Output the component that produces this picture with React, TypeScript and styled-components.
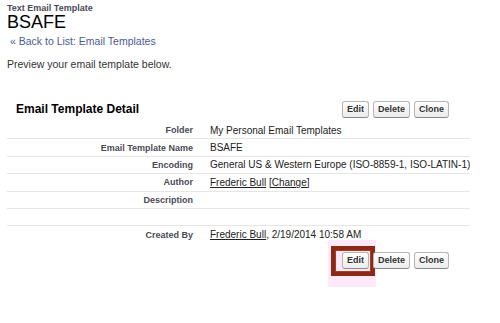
import React from "react";
import styled, { createGlobalStyle } from "styled-components";

const GlobalStyle = createGlobalStyle`
  html, body {
    margin: 0;
    padding: 0;
    background: #ffffff;
  }
  body {
    font-family: "Liberation Sans", Arial, sans-serif;
    color: #222222;
  }
`;

type Row = {
  label: string;
  value?: React.ReactNode;
};

function getRows(): Row[] {
  return [
    { label: "Folder", value: "My Personal Email Templates" },
    { label: "Email Template Name", value: "BSAFE" },
    {
      label: "Encoding",
      value: "General US & Western Europe (ISO-8859-1, ISO-LATIN-1)",
    },
    {
      label: "Author",
      value: (
        <>
          <UserLink>Frederic Bull</UserLink> <UserLink>[Change]</UserLink>
        </>
      ),
    },
    { label: "Description" },
    { label: "" },
    {
      label: "Created By",
      value: (
        <>
          <UserLink>Frederic Bull</UserLink>, 2/19/2014 10:58 AM
        </>
      ),
    },
  ];
}

function ButtonGroup({ highlightEdit }: { highlightEdit?: boolean }) {
  return (
    <Buttons>
      <EditWrap>
        {highlightEdit && <Glow />}
        <Button>Edit</Button>
        {highlightEdit && <Callout />}
      </EditWrap>
      <Button>Delete</Button>
      <Button>Clone</Button>
    </Buttons>
  );
}

export default function App() {
  const rows = getRows();
  return (
    <Page>
      <GlobalStyle />
      <Header>
        <TypeLabel>Text Email Template</TypeLabel>
        <Title>BSAFE</Title>
        <BackLink>
          <span>«</span> Back to List: Email Templates
        </BackLink>
      </Header>
      <Intro>Preview your email template below.</Intro>
      <Block>
        <BlockHeader>
          <BlockTitle>Email Template Detail</BlockTitle>
          <ButtonGroup />
        </BlockHeader>
        <DetailList>
          {rows.map((row, i) => (
            <DetailRow key={i} $last={i === rows.length - 1}>
              <Label>{row.label}</Label>
              <Value>{row.value}</Value>
            </DetailRow>
          ))}
        </DetailList>
        <BlockFooter>
          <span />
          <ButtonGroup highlightEdit />
        </BlockFooter>
      </Block>
    </Page>
  );
}

const Page = styled.div`
  width: 500px;
  height: 323px;
  padding: 3px 0 0 7px;
  box-sizing: border-box;
  overflow: hidden;
`;

const Header = styled.div`
  display: flex;
  flex-direction: column;
`;

const TypeLabel = styled.div`
  font-size: 9px;
  font-weight: bold;
  line-height: 10px;
  color: #4a4a56;
`;

const Title = styled.h1`
  margin: 0;
  font-size: 18px;
  font-weight: normal;
  line-height: 18px;
  color: #000000;
`;

const BackLink = styled.a`
  margin-top: 4px;
  padding-left: 3px;
  font-size: 10.5px;
  line-height: 12px;
  color: #4b5b8f;
  cursor: pointer;
`;

const Intro = styled.p`
  margin: 10px 0 0;
  font-size: 10.5px;
  line-height: 14px;
  color: #333333;
`;

const Block = styled.div`
  margin-top: 29px;
  width: 463px;
`;

const BlockHeader = styled.div`
  display: grid;
  grid-template-columns: 335px auto;
  align-items: center;
  padding: 1px 0 4px;
`;

const BlockTitle = styled.h2`
  margin: 0;
  padding-left: 9px;
  font-size: 12px;
  line-height: 17px;
  font-weight: bold;
  color: #000000;
`;

const Buttons = styled.div`
  display: flex;
  gap: 4px;
`;

const EditWrap = styled.div`
  position: relative;
  display: flex;
`;

const Button = styled.button`
  position: relative;
  height: 17px;
  padding: 0 4px;
  border: 1px solid #b5b5b5;
  border-bottom-color: #8a8a8a;
  border-radius: 3px;
  background: linear-gradient(#ffffff, #ececec);
  font-family: "Liberation Sans", Arial, sans-serif;
  font-size: 9px;
  font-weight: bold;
  line-height: 15px;
  color: #333333;
  cursor: pointer;
`;

const Callout = styled.span`
  position: absolute;
  left: -11px;
  top: -6px;
  width: 44px;
  height: 30px;
  box-sizing: border-box;
  border: 4px solid #8a2a16;
  box-shadow: inset 0 0 0 1px #b03a20;
  pointer-events: none;
`;

const Glow = styled.span`
  position: absolute;
  left: -14px;
  top: -12px;
  width: 48px;
  height: 47px;
  background: rgba(255, 205, 240, 0.45);
  pointer-events: none;
`;

const DetailList = styled.div`
  display: flex;
  flex-direction: column;
`;

const DetailRow = styled.div<{ $last?: boolean }>`
  display: grid;
  grid-template-columns: 196px 1fr;
  align-items: center;
  height: 17.4px;
  border-bottom: 1px solid ${(p) => (p.$last ? "transparent" : "#e6e6e6")};
  box-sizing: border-box;
`;

const Label = styled.div`
  padding-right: 10px;
  text-align: right;
  font-size: 9px;
  font-weight: bold;
  color: #4a4a56;
`;

const Value = styled.div`
  padding-left: 7px;
  font-size: 10px;
  color: #222222;
  white-space: nowrap;
`;

const UserLink = styled.a`
  color: #222222;
  text-decoration: underline;
  cursor: pointer;
`;

const BlockFooter = styled.div`
  display: grid;
  grid-template-columns: 335px auto;
  margin-top: 8px;
`;
